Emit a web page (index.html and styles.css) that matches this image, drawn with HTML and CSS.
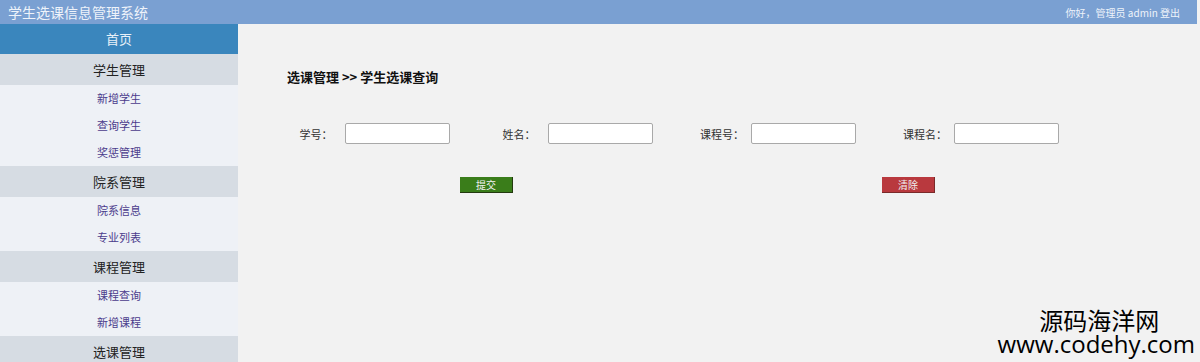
FILE: index.html
```html
<!DOCTYPE html>
<html lang="zh-CN">
<head>
    <meta charset="UTF-8">
    <meta name="viewport" content="width=device-width, initial-scale=1.0">
    <title>学生选课信息管理系统</title>
    <link rel="stylesheet" href="styles.css">
</head>
<body>
    <div class="top">
        <span class="logo">学生选课信息管理系统</span>
        <span class="user">你好，管理员 admin 登出</span>
    </div>
    <div class="wrap">
        <div class="menu">
            <div class="home">首页</div>
            <div class="group">学生管理</div>
            <a class="item">新增学生</a>
            <a class="item">查询学生</a>
            <a class="item">奖惩管理</a>
            <div class="group">院系管理</div>
            <a class="item">院系信息</a>
            <a class="item">专业列表</a>
            <div class="group">课程管理</div>
            <a class="item">课程查询</a>
            <a class="item">新增课程</a>
            <div class="group">选课管理</div>
        </div>
        <div class="main">
            <h3 class="crumb">选课管理 &gt;&gt; 学生选课查询</h3>
            <div class="fields">
                <div class="field"><label>学号：</label><input type="text"></div>
                <div class="field"><label>姓名：</label><input type="text"></div>
                <div class="field"><label>课程号：</label><input type="text"></div>
                <div class="field"><label>课程名：</label><input type="text"></div>
            </div>
            <div class="btns">
                <button class="btn ok">提交</button>
                <button class="btn clear">清除</button>
            </div>
            <div class="mark">
                <div class="mark-cn">源码海洋网</div>
                <div class="mark-url">www.codehy.com</div>
            </div>
        </div>
    </div>
</body>
</html>
```
FILE: styles.css
```css
body { margin: 0; font-family: "Noto Sans CJK SC", "Noto Sans", sans-serif; background: #f2f2f2; overflow: hidden; }
.top { height: 24px; background: #7aa0d2; display: flex; align-items: center; justify-content: space-between; padding: 0 17px 0 8px; color: #eef3fa; margin-right: 3px; }
.logo { font-size: 14px; }
.user { font-size: 10px; }
.wrap { display: flex; height: 338px; }
.menu { width: 238px; background: #eef1f6; flex-shrink: 0; }
.home { height: 30px; line-height: 30px; background: #3a86bd; color: #e6f0f8; text-align: center; font-size: 13px; }
.group { height: 31px; line-height: 31px; background: #d6dce3; color: #222; text-align: center; font-size: 13px; }
.item { display: block; height: 27px; line-height: 27px; text-align: center; font-size: 11px; color: #4b3b8c; }
.main { flex: 1; position: relative; padding-left: 49px; }
.crumb { margin: 44px 0 0; font-size: 13px; font-weight: bold; color: #111; line-height: 18px; }
.fields { display: flex; margin-top: 37px; }
.field { width: 203px; display: flex; align-items: center; }
.field label { width: 58px; text-align: center; font-size: 11px; color: #333; }
.field input { width: 103px; height: 19px; padding: 0; border: 1px solid #a9a9a9; border-radius: 2px; background: #fff; margin: 0; }
.btns { display: flex; margin-top: 33px; padding-left: 173px; }
.btn { width: 53px; height: 16px; padding: 0; font-size: 10px; color: #f0f0f0; font-family: inherit; line-height: 14px; }
.ok { background: #3a7d1a; border: 1px solid #23390f; border-width: 0 1px 1px 0; }
.clear { background: #b9393e; border: 1px solid #7a2a2a; border-width: 0 1px 1px 0; margin-left: 369px; }
.mark { position: absolute; right: 5px; bottom: 7px; text-align: center; color: #000; }
.mark-cn { font-size: 24px; line-height: 25px; padding-left: 6px; }
.mark-url { font-family: "Open Sans", "Noto Sans", sans-serif; font-size: 24px; line-height: 23px; }
```
